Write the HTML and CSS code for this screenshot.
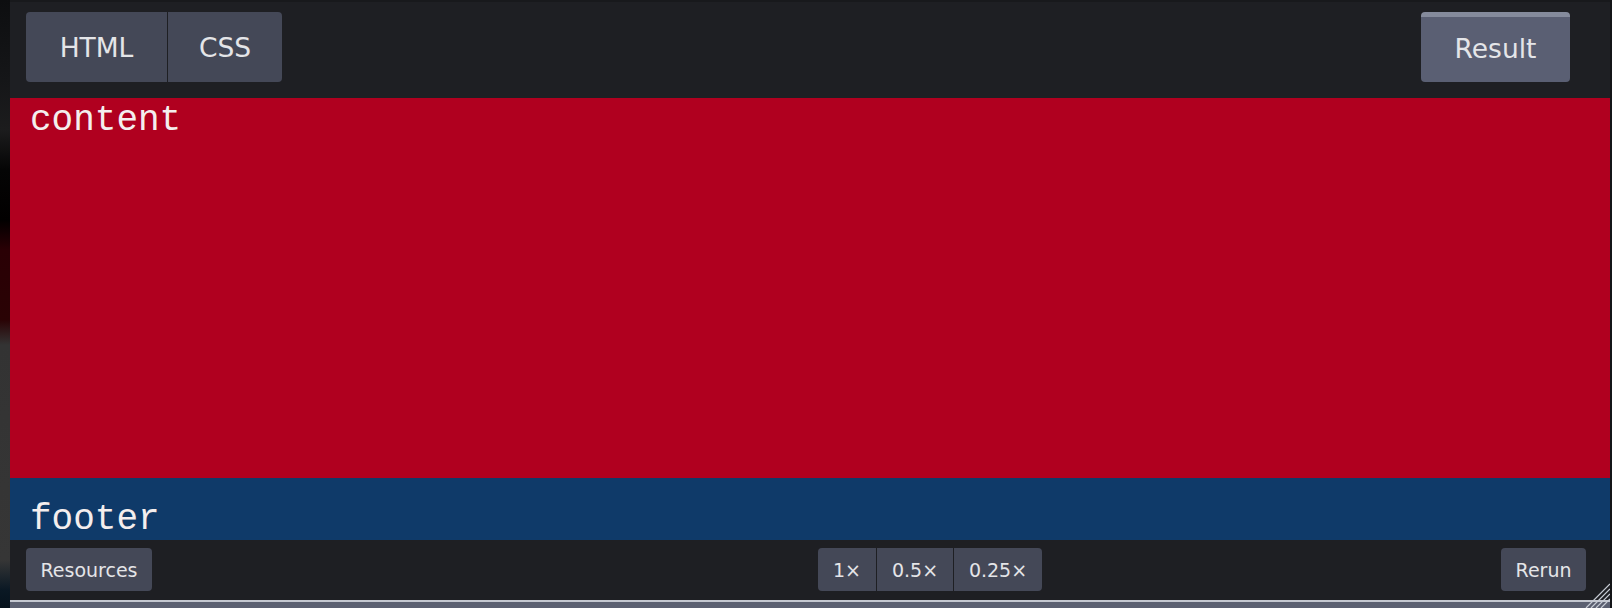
FILE: index.html
```html
<!DOCTYPE html>
<html>
<head>
<meta charset="utf-8">
<link rel="stylesheet" href="styles.css">
</head>
<body>
<div class="page">
  <div class="side"></div>
  <div class="embed">
    <header class="topbar">
      <div class="group">
        <button class="btn tab">HTML</button>
        <button class="btn tab css">CSS</button>
      </div>
      <button class="btn tab result">Result</button>
    </header>
    <main class="content"><span class="mono">content</span></main>
    <div class="footer"><span class="mono">footer</span></div>
    <footer class="bottombar">
      <button class="btn small res">Resources</button>
      <div class="group scale">
        <button class="btn small s1">1×</button>
        <button class="btn small s2">0.5×</button>
        <button class="btn small s3">0.25×</button>
      </div>
      <button class="btn small rerun">Rerun</button>
    </footer>
    <div class="edge"></div>
    <svg class="grip" width="30" height="30" viewBox="0 0 30 30">
      <g stroke="#c9cdd6" stroke-width="1.2">
        <line x1="6" y1="30" x2="30" y2="6"/>
        <line x1="11" y1="30" x2="30" y2="11"/>
        <line x1="16" y1="30" x2="30" y2="16"/>
        <line x1="21" y1="30" x2="30" y2="21"/>
      </g>
    </svg>
  </div>
  <div class="rside"></div>
</div>
</body>
</html>
```
FILE: styles.css
```css
html, body {
  margin: 0;
  padding: 0;
  background: #111216;
  width: 1612px;
  height: 608px;
  overflow: hidden;
}
.page {
  display: flex;
  width: 1612px;
  height: 608px;
}
.side {
  width: 10px;
  flex: none;
  background: linear-gradient(to bottom, #0d0e10 0px, #151618 80px, #1c1c1d 130px, #050505 170px, #020000 220px, #2a0005 250px, #2a0305 320px, #333333 345px, #363636 560px, #0a1824 590px, #06121c 608px);
}
.rside {
  width: 2px;
  flex: none;
  background: #141518;
}
.embed {
  position: relative;
  flex: 1;
  display: flex;
  flex-direction: column;
  background: #1e1f23;
}
.btn {
  border: none;
  margin: 0;
  font-family: "DejaVu Sans", Verdana, sans-serif;
  color: #e4e5e8;
  background: #444857;
  cursor: pointer;
}
.topbar {
  height: 98px;
  box-sizing: border-box;
  padding: 10px 40px 16px 16px;
  display: flex;
  justify-content: space-between;
  align-items: stretch;
  border-top: 2px solid #18191c;
}
.group {
  display: flex;
  gap: 1px;
}
.tab {
  font-size: 26.5px;
  height: 70px;
  padding: 0;
  border-radius: 0;
}
.group .tab:first-child { border-radius: 4px 0 0 4px; width: 141px; }
.group .tab.css { border-radius: 0 4px 4px 0; width: 114px; }
.result {
  width: 149px;
  border-radius: 4px;
  background: #5a5f73;
  border-top: 5px solid #858b9c;
  padding-bottom: 2px;
}
.mono {
  font-family: "Courier New", "Nimbus Mono PS", "FreeMono", Courier, "Liberation Mono", monospace;
  font-size: 36px;
  color: #f4eeee;
}
.content {
  height: 382px;
  background: #b0001f;
  padding: 0 0 0 20px;
  box-sizing: border-box;
  line-height: 45px;
}
.footer {
  height: 62px;
  background: #0f3a69;
  padding: 21px 0 0 20px;
  box-sizing: border-box;
  line-height: 41px;
  overflow: hidden;
}
.bottombar {
  height: 60px;
  box-sizing: border-box;
  padding: 8px 24px 9px 16px;
  display: flex;
  justify-content: space-between;
  align-items: stretch;
  position: relative;
}
.small {
  font-size: 19px;
  border-radius: 4px;
  padding: 0;
  height: 43px;
}
.res { width: 126px; }
.rerun { width: 85px; }
.scale {
  position: absolute;
  left: 808px;
  top: 8px;
}
.scale .small { border-radius: 0; }
.s1 { width: 58px; border-radius: 4px 0 0 4px !important; }
.s2 { width: 76px; }
.s3 { width: 88px; border-radius: 0 4px 4px 0 !important; }
.edge {
  height: 6px;
  border-top: 2px solid #c4c8d0;
  background: #5b6071;
}
.grip {
  position: absolute;
  right: 0;
  bottom: 0;
}
```
